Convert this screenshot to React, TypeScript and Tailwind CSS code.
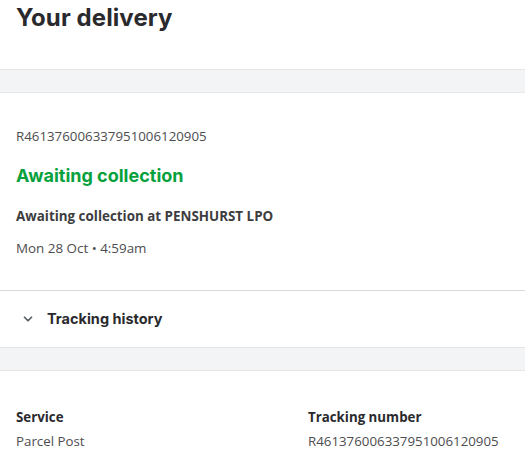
import { ChevronDown } from "lucide-react";

const body = "font-['Open_Sans',sans-serif]";
const display = "font-['Inter',sans-serif]";
const trackingId = "R46137600633795100612090" + "5";

export default function App() {
  return (
    <div className={`w-[525px] h-[465px] overflow-hidden bg-white ${body}`}>
      <div className="h-[70px] px-4 border-b border-[#e3e4e6]">
        <h1 className={`${display} text-[24px] leading-[36px] font-bold text-[#2a2a2e] tracking-[0.1px]`}>
          Your delivery
        </h1>
      </div>
      <div className="h-[23px] bg-[#f3f4f6] border-b border-[#e8e9eb]" />

      <div className="px-4 pt-[34px] h-[198px] border-b border-[#d8d8d8]">
        <p className="text-[13.3px] leading-[18px] text-[#4d4d4f]">{trackingId}</p>
        <p className={`${display} mt-[19px] text-[18px] leading-[24px] font-bold text-[#06a13c]`}>
          Awaiting collection
        </p>
        <p className="mt-[19px] text-[13.4px] leading-[18px] font-bold text-[#3d3d40]">
          Awaiting collection at PENSHURST LPO
        </p>
        <p className="mt-[14px] text-[13.4px] leading-[18px] text-[#4d4d4f]">Mon 28 Oct • 4:59am</p>
      </div>

      <button className="flex h-[56px] w-full items-center gap-[12px] pl-[21px] text-left">
        <ChevronDown className="h-[14px] w-[14px] text-[#575c63]" strokeWidth={3} />
        <span className={`${display} text-[14.5px] font-bold text-[#2a2a2e]`}>Tracking history</span>
      </button>
      <div className="h-[24px] bg-[#f3f4f6] border-y border-[#e3e4e6]" />

      <div className="grid grid-cols-[292px_1fr] px-4 pt-[34px]">
        <div>
          <p className="text-[13.3px] leading-[24px] font-bold text-[#2a2a2e]">Service</p>
          <p className="text-[13.3px] leading-[24px] text-[#4d4d4f]">Parcel Post</p>
        </div>
        <div>
          <p className="text-[13.3px] leading-[24px] font-bold text-[#2a2a2e]">Tracking number</p>
          <p className="text-[13.3px] leading-[24px] text-[#4d4d4f]">{trackingId}</p>
        </div>
      </div>
    </div>
  );
}
